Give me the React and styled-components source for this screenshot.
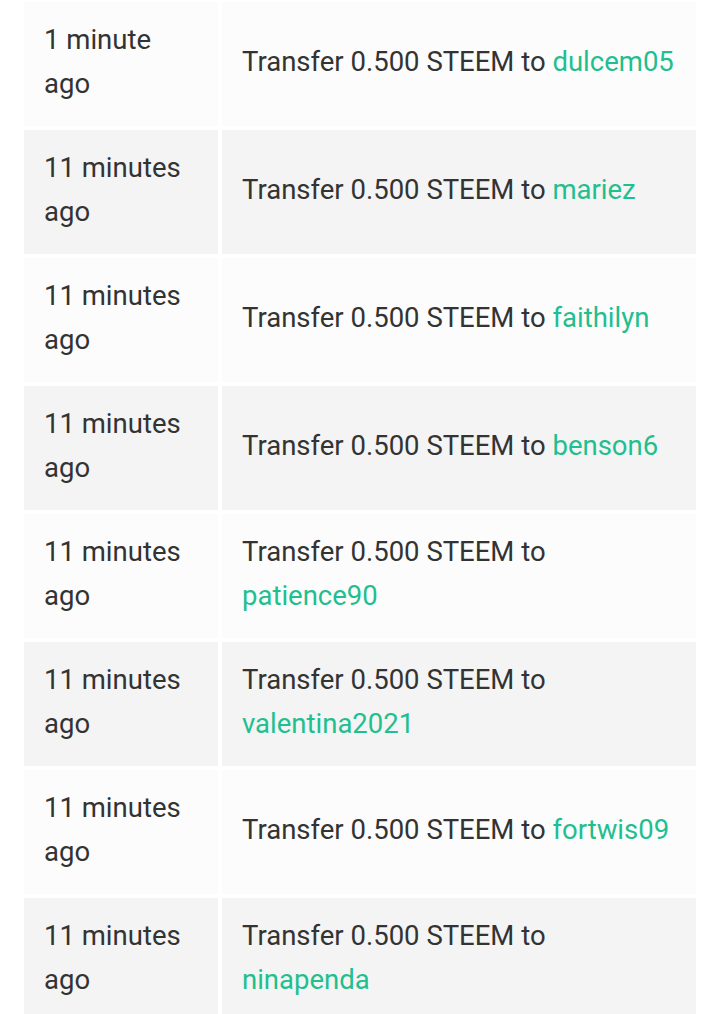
import React from "react";
import styled, { createGlobalStyle } from "styled-components";

const Global = createGlobalStyle`
  html, body { margin: 0; padding: 0; background: #ffffff; }
  body { font-family: Roboto, "Noto Sans", "Liberation Sans", sans-serif; }
`;

const Table = styled.div`
  display: grid;
  grid-template-columns: 194px 474px;
  grid-auto-rows: 124px;
  gap: 4px;
  padding: 2px 21px 0 24px;
`;

const Cell = styled.div`
  background: ${(p) => (p.$odd ? "#fcfcfc" : "#f4f4f4")};
  color: #333333;
  font-size: 27.5px;
  line-height: 44px;
  padding: 0 20px 4px;
  display: flex;
  align-items: center;
  box-sizing: border-box;
`;

const CellText = styled.div``;

const Account = styled.a`
  color: #1fbf8f;
  text-decoration: none;
`;

const rows = [
  ["1 minute ago", "dulcem05"],
  ["11 minutes ago", "mariez"],
  ["11 minutes ago", "faithilyn"],
  ["11 minutes ago", "benson6"],
  ["11 minutes ago", "patience90"],
  ["11 minutes ago", "valentina2021"],
  ["11 minutes ago", "fortwis09"],
  ["11 minutes ago", "ninapenda"],
];

export default function App() {
  return (
    <>
      <Global />
      <Table>
        {rows.map(([time, to], i) => (
          <React.Fragment key={i}>
            <Cell $odd={i % 2 === 0}>
              <CellText>{time}</CellText>
            </Cell>
            <Cell $odd={i % 2 === 0}>
              <CellText>
                Transfer 0.500 STEEM to <Account href="#">{to}</Account>
              </CellText>
            </Cell>
          </React.Fragment>
        ))}
      </Table>
    </>
  );
}
